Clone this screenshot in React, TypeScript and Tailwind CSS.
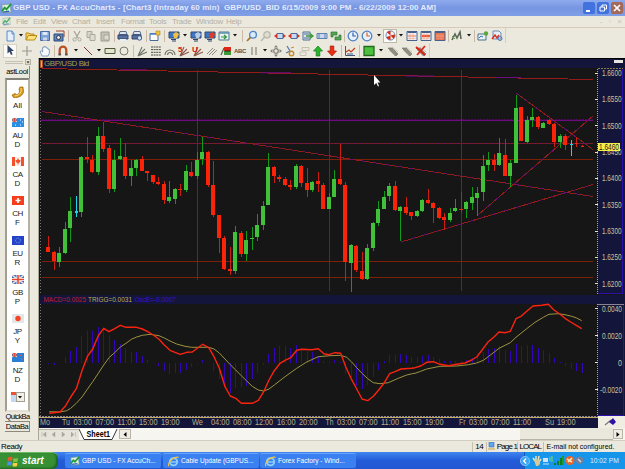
import type { ReactNode } from "react";

type Candle = [high: number, top: number, bottom: number, low: number, color: "r" | "g" | "c"];

// candle values are thirds of a pixel below the top of the chart window
const candles: Candle[] = [
  [535, 567, 582, 582, "r"], [580, 582, 610, 635, "r"], [568, 585, 611, 627, "g"], [492, 514, 586, 588, "g"],
  [418, 459, 511, 553, "g"], [414, 459, 464, 476, "c"], [293, 296, 461, 476, "g"], [238, 297, 304, 315, "r"],
  [290, 305, 342, 345, "r"], [208, 234, 342, 350, "g"], [192, 234, 273, 281, "r"], [262, 270, 393, 406, "r"],
  [277, 305, 393, 402, "g"], [240, 294, 304, 306, "g"], [256, 296, 355, 364, "r"], [305, 330, 355, 383, "g"],
  [303, 306, 331, 354, "g"], [294, 304, 338, 340, "r"], [338, 339, 346, 368, "r"], [350, 352, 372, 377, "r"],
  [357, 371, 379, 381, "r"], [370, 378, 426, 437, "r"], [370, 417, 429, 434, "g"], [390, 393, 424, 437, "g"],
  [378, 393, 397, 414, "r"], [321, 339, 397, 402, "g"], [312, 342, 355, 357, "r"], [282, 305, 355, 362, "g"],
  [236, 281, 303, 320, "g"], [279, 281, 380, 388, "r"], [308, 380, 472, 476, "r"], [470, 472, 540, 585, "r"],
  [535, 540, 633, 636, "r"], [568, 632, 640, 650, "r"], [503, 523, 640, 647, "g"], [518, 525, 587, 596, "r"],
  [520, 546, 587, 608, "g"], [507, 540, 544, 575, "g"], [468, 502, 538, 548, "g"], [430, 443, 502, 515, "g"],
  [286, 328, 440, 442, "g"], [324, 327, 355, 375, "r"], [352, 357, 363, 372, "r"], [357, 364, 380, 383, "r"],
  [365, 380, 387, 397, "r"], [319, 323, 388, 392, "g"], [322, 324, 375, 388, "r"], [330, 374, 395, 416, "r"],
  [369, 372, 396, 402, "g"], [342, 369, 378, 402, "r"], [376, 380, 452, 453, "r"], [404, 417, 452, 453, "g"],
  [336, 362, 416, 418, "g"], [258, 363, 378, 380, "r"], [373, 381, 611, 668, "r"], [558, 562, 615, 701, "g"],
  [562, 563, 635, 643, "r"], [582, 639, 663, 666, "r"], [558, 570, 664, 666, "g"], [492, 494, 570, 580, "g"],
  [430, 453, 495, 504, "g"], [399, 417, 452, 453, "g"], [376, 385, 415, 430, "g"], [370, 384, 457, 459, "r"],
  [445, 448, 458, 550, "g"], [417, 446, 465, 470, "r"], [461, 462, 473, 487, "r"], [456, 458, 474, 476, "g"],
  [424, 427, 459, 461, "g"], [393, 426, 435, 438, "r"], [433, 434, 450, 494, "r"], [447, 449, 480, 482, "r"],
  [465, 477, 487, 515, "r"], [451, 465, 486, 491, "g"], [424, 450, 460, 462, "g"], [402, 453, 456, 466, "r"],
  [428, 431, 453, 479, "g"], [387, 417, 436, 455, "g"], [388, 404, 420, 473, "g"], [291, 323, 402, 428, "g"],
  [281, 306, 320, 340, "g"], [288, 306, 321, 339, "r"], [240, 286, 321, 323, "g"], [244, 291, 353, 355, "r"],
  [306, 314, 354, 386, "g"], [111, 149, 314, 316, "g"], [147, 148, 249, 250, "r"], [173, 187, 251, 256, "g"],
  [150, 176, 186, 208, "g"], [175, 177, 207, 212, "r"], [192, 195, 209, 210, "g"], [183, 187, 197, 201, "r"],
  [196, 199, 252, 266, "r"], [228, 235, 251, 269, "g"], [228, 234, 261, 275, "r"], [246, 258, 262, 293, "c"],
  [238, 255, 258, 268, "r"], [262, 263, 266, 266, "r"],
];

const fills = { r: "#fb2408", g: "#41c03a", c: "#18d8e8" };
const wicks = { r: "#cc1e12", g: "#0f9a18", c: "#18d8e8" };

// oscillator bar ends, 233 is the zero line
const bars = [
  238, 240, 233, 217, 197, 185, 154, 138, 138, 125, 132, 150, 164, 178, 188, 200, 202, 214, 224, 234, 244, 257, 266,
  264, 264, 254, 247, 236, 224, 234, 258, 282, 305, 323, 310, 306, 303, 281, 263, 240, 207, 190, 183, 183, 188, 180,
  190, 198, 202, 212, 228, 231, 226, 231, 266, 280, 302, 311, 300, 276, 254, 228, 210, 210, 207, 211, 216, 216, 212,
  211, 215, 222, 229, 229, 229, 228, 224, 220, 212, 202, 192, 190, 184, 196, 197, 177, 182, 179, 179, 188, 195, 204,
  220, 231, 244, 251, 257, 263,
];

const macd: [number, string][] = [
  [0, "148,385 180,381 197,362 212,336 229,311 246,257 262,215 278,192 295,152 311,130 327,140 344,131 361,121 378,127 410,127 427,132 443,140 460,150 477,163 493,180 510,196 525,202 541,208 560,202 577,201 592,190 608,178"],
  [205, "11,188 27,215 43,250 60,305 76,333 92,340 109,355 142,355 160,346 176,320 192,285 208,257 224,236 240,226 257,218 275,196 290,193 320,194 340,191 357,206 372,209 390,203 407,205 422,245 438,280 455,312 471,342 488,347 505,334 521,315 538,293 554,266 570,260 588,252 620,250"],
  [415, "0,248 17,243 35,232 55,230 75,238 100,242 125,238 150,234 170,225 185,216 202,194 220,170 238,155 252,141 270,143 286,139 303,101 318,94 335,79 354,63 380,61 400,58 417,75 434,87 450,100 467,111 484,121 500,131"],
];

const trigger: [number, string][] = [
  [0, "148,380 180,381 200,377 212,370 229,355 246,336 262,313 278,290 295,265 311,240 328,217 344,203 361,186 378,175 394,163 410,156 427,151 450,148 477,152 493,159 510,168 530,177 555,184 575,187 620,187"],
  [205, "11,187 27,192 43,204 60,222 76,239 92,255 109,272 125,288 142,304 160,315 176,318 192,312 208,300 240,275 275,250 305,231 340,215 375,212 407,211 425,217 440,231 455,248 471,265 488,281 505,293 525,296 550,293 580,280 605,270 622,266"],
  [415, "0,265 17,259 35,252 75,244 125,243 160,239 185,234 205,226 220,215 252,190 286,173 303,157 335,131 360,112 385,97 402,88 430,86 450,89 470,94 485,99 500,107"],
];

const toPoints = (parts: [number, string][]) =>
  parts
    .flatMap(([dx, s]) =>
      s.split(" ").map((p) => {
        const [x, y] = p.split(",").map(Number);
        return `${(dx + x / 3).toFixed(1)},${(285 + y / 3).toFixed(1)}`;
      })
    )
    .join(" ");

const barX = (i: number) => Math.round(48.9 + 5.5 * i - 0.5);

const times: [string, number, number][] = [
  ["Mo", 40, 10], ["Tu", 62, 8], ["03:00", 73.5, 18.5], ["07:00", 95.5, 18.5], ["11:00", 117.5, 18], ["15:00", 139, 18.5],
  ["19:00", 161, 18.5], ["We", 192, 11], ["04:00", 211, 18.5], ["08:00", 233, 18.5], ["12:00", 255, 18], ["16:00", 277, 18.5],
  ["20:00", 299, 18.5], ["Th", 325.5, 8], ["03:00", 337, 18.5], ["07:00", 359, 18.5], ["11:00", 381, 18], ["15:00", 403, 18.5],
  ["19:00", 425, 18.5], ["Fr", 459, 6.5], ["03:00", 469, 18.5], ["07:00", 491, 18.5], ["11:00", 513, 18], ["Su", 545, 9],
  ["19:00", 557, 18.5],
];

const prices = ["1.6600", "1.6550", "1.6500", "1.6450", "1.6400", "1.6350", "1.6300", "1.6250", "1.6200"];

/* ---------- toolbar ---------- */

function Ico({ children, w = 12 }: { children: ReactNode; w?: number }) {
  return (
    <span className="flex w-[14px] shrink-0 items-center justify-center">
      <svg width={w} height={w} viewBox="0 0 12 12" fill="none">{children}</svg>
    </span>
  );
}

function Drop({ className = "w-2" }: { className?: string }) {
  return (
    <span className={`flex shrink-0 items-center justify-center ${className}`}>
      <svg width="4" height="3" viewBox="0 0 4 3"><path d="M0 0h4L2 2.6z" fill="#111" /></svg>
    </span>
  );
}

function Sep({ className = "w-1" }: { className?: string }) {
  return (
    <span className={`flex shrink-0 justify-center ${className}`}>
      <span className="h-[12px] w-px bg-[#c9b9a6]" />
    </span>
  );
}

const Monitor = ({ badge }: { badge: string }) => (
  <Ico>
    <path d="M1 2h10v6H1z" fill="#3f76c4" stroke="#30486f" />
    <path d="M3 9.5h5M4 11h4" stroke="#30486f" />
    <path d="M5 4l3-2 3 2-2 4-3 0z" fill={badge} />
  </Ico>
);

const Grid = ({ a, b }: { a: string; b: string }) => (
  <Ico>
    <path d="M1 1.5h10v9H1z" fill={a} stroke="#44628c" />
    <path d="M1.5 2.5h9" stroke="#44628c" />
    <path d="M2 6h8" stroke={b} strokeWidth="2.4" />
    <path d="M2 8.6h8M4 3v7M7 3v7" stroke="#e69a80" strokeWidth=".5" />
  </Ico>
);

const BoxArrows = () => (
  <Ico>
    <path d="M3 3.5h6v5H3z" fill="#c3dcf3" stroke="#4a6a9a" />
    <path d="M0 6l3-2.3v4.6zM12 6L9 3.7v4.6z" fill="#d8301c" />
  </Ico>
);

const Clock = ({ hue }: { hue: string }) => (
  <Ico>
    <circle cx="6" cy="6" r="4.8" fill="#e8f1fb" stroke="#4d80c9" strokeWidth="1.3" />
    <path d="M6 2.5V6l3 0" stroke={hue} strokeWidth="1.2" />
  </Ico>
);

const Fan = ({ mark, hue }: { mark?: string; hue: string }) => (
  <Ico>
    <path d="M2 11L6 2M2 11l7-7M2 11l9-4" stroke={hue} strokeWidth="1.1" />
    {mark && <text x="0" y="7" fontSize="8" fontWeight="bold" fill="#d42414" fontFamily="Liberation Sans, sans-serif">{mark}</text>}
  </Ico>
);

const Eraser = ({ x }: { x?: boolean }) => (
  <Ico>
    <path d="M1 3l4 0 6 6-2 2z" fill="#8e8d84" stroke="#6c6b63" strokeWidth=".6" />
    <path d="M2 5l6 6M5 2l6 5" stroke="#b5b3a8" strokeWidth=".8" />
    {x && <path d="M1 2l9 8M10 1L2 10" stroke="#e02012" strokeWidth="1.7" />}
  </Ico>
);

function MainToolbar() {
  return (
    <div className="flex h-[15px] w-[506px] shrink-0 items-center border-r border-[#d4d0c2] pl-[3px]">
      <Ico><path d="M3 1h5l2 2.5V11H3z" fill="#e4effb" stroke="#5b8cc9" /><path d="M8 1v3h2" stroke="#5b8cc9" /></Ico>
      <Drop className="w-[7px]" />
      <Ico><path d="M1 10V3h3l1 1h4v2" fill="#f3d060" stroke="#b88a1c" /><path d="M1 10l2.5-4.5H12L9.5 10z" fill="#ffe27a" stroke="#b88a1c" /></Ico>
      <Ico><path d="M1.5 1.5h9v9h-9z" fill="#7da2d8" stroke="#4a6ca8" /><path d="M3.5 2h5v3h-5z" fill="#dfe9f6" /><path d="M4 7.5h4v3H4z" fill="#cbd8ea" /></Ico>
      <Ico><path d="M1 4h9v7H1z" fill="#5f88c4" stroke="#2c4676" /><path d="M3 1h8v6" stroke="#9a3c28" /><circle cx="5.5" cy="7.5" r="2" fill="#e3e8ef" stroke="#333" /></Ico>
      <Sep />
      <Ico><path d="M3 1l4 7M9 1L5 8" stroke="#a8a69a" strokeWidth="1.3" /><circle cx="3.5" cy="9.5" r="1.6" stroke="#a8a69a" /><circle cx="8.5" cy="9.5" r="1.6" stroke="#a8a69a" /></Ico>
      <Ico><path d="M2 1.5h5v6H2z" fill="#d6d4c8" stroke="#aaa89b" /><path d="M5 4.5h5v6H5z" fill="#dedccf" stroke="#aaa89b" /></Ico>
      <Ico><path d="M2 2h8v9H2z" fill="#c5c3b7" stroke="#9d9b8f" /><path d="M5 5h5v5H5z" fill="#dddbd0" stroke="#a9a79b" /></Ico>
      <Sep />
      <Ico><path d="M3 1.5h6l1 3H2z" fill="#dbe5f1" stroke="#5a6b8a" /><path d="M1 5h10v4H1z" fill="#56719f" stroke="#33466a" /><path d="M3 9h6v2H3z" fill="#e8eef7" /></Ico>
      <Ico><path d="M3 1.5h6l1 3H2z" fill="#dbe5f1" stroke="#5a6b8a" /><path d="M1 5h9v4H1z" fill="#56719f" stroke="#33466a" /><circle cx="8.5" cy="8" r="2.2" fill="#cfe2f5" stroke="#3e5f95" /></Ico>
      <Sep />
      <Ico><path d="M1 3.5h8v7H1z" fill="#fdfdf8" stroke="#48689c" /><path d="M1 4h8" stroke="#4e7fc9" strokeWidth="1.5" /><path d="M7 1h4v4H7z" fill="#f0c23c" stroke="#b08820" strokeWidth=".6" /></Ico>
      <Sep className="w-[5px]" />
      <Monitor badge="#f5c040" />
      <Drop />
      <Monitor badge="#b9cde8" />
      <Monitor badge="#e03a20" />
      <Ico><path d="M1 2h10v8H1z" fill="#e9f3ef" stroke="#4f7892" /><path d="M1 3h10" stroke="#5c8fb0" strokeWidth="1.5" /><path d="M3 7h5M6 5l2.4 2L6 9" stroke="#2e9444" strokeWidth="1.2" /></Ico>
      <Drop />
      <Sep className="w-[6px]" />
      <Ico><circle cx="7" cy="4.8" r="3.4" fill="#d9ecfb" stroke="#5285c4" strokeWidth="1.3" /><path d="M4.5 7.3L1 11" stroke="#a9742f" strokeWidth="1.7" /></Ico>
      <Ico><circle cx="7" cy="4.8" r="3.2" fill="#deddd2" stroke="#bab8ac" strokeWidth="1.3" /><path d="M4.5 7.3L1 11" stroke="#bab8ac" strokeWidth="1.5" /></Ico>
      <BoxArrows />
      <BoxArrows />
      <Ico><path d="M1 2h7v8H1z" fill="#dbe7f3" stroke="#4f6c8e" /><path d="M2 4h5M2 8h5" stroke="#4f6c8e" /><path d="M4 6h6M8 3.5L11 6 8 8.5" stroke="#3d9a3a" strokeWidth="1.3" /></Ico>
      <Ico><path d="M1 3.5h10v5H1z" fill="#c7d9ee" stroke="#5f7fb0" /><path d="M3 3.5v5M9 3.5v5" stroke="#5f7fb0" /></Ico>
      <Ico><path d="M1 2h6v3H3v2H1zM11 10H5V7h4V5h2z" fill="#55a556" stroke="#2d7531" strokeWidth=".7" /></Ico>
      <Sep className="w-[3px]" />
      <Clock hue="#2f62b0" />
      <Clock hue="#dd6b20" />
      <Drop className="w-[9px]" />
      <span className="flex h-[14px] w-[14px] items-center justify-center border border-[#bdb9ab] bg-[#fbfaf5]">
        <svg width="11" height="11" viewBox="0 0 12 12"><circle cx="6" cy="6" r="5" fill="#f3f1ec" stroke="#5b86bf" /><path d="M6 6L2 2.5a5 5 0 0 1 4-1.5zM6 6l4.8-1a5 5 0 0 1-1.5 4.5zM6 6l0 5a5 5 0 0 1-4.5-3z" fill="#d62a18" /></svg>
      </span>
      <Drop />
      <Grid a="#f4f6fa" b="#f2b59f" />
      <Grid a="#f5efe9" b="#ee5a36" />
      <Grid a="#f0714e" b="#f08a68" />
      <Sep className="w-[3px]" />
      <Ico><path d="M1 10l3-6 2 4 3-6 1 7" stroke="#5a6657" strokeWidth="1.6" /><path d="M1 6l3 3" stroke="#55a04a" /></Ico>
      <Drop className="w-[9px]" />
      <Sep className="w-[3px]" />
      <Ico><path d="M1 4h8v6H1z" fill="#e8f2f6" stroke="#50708a" /><path d="M2 8l2-2 2 1" stroke="#3b70b0" /><circle cx="9" cy="3.5" r="2.2" fill="#58a83a" /></Ico>
      <Ico><path d="M2 1h6l2 2v6H2z" fill="#e6eef8" stroke="#6d8ab5" /><path d="M1 9l3-4 2 3 2-3" stroke="#d7301c" strokeWidth="1.4" /><circle cx="9" cy="8.5" r="2" stroke="#4a78b8" /></Ico>
    </div>
  );
}

function DrawToolbar() {
  return (
    <div className="flex h-[15px] w-[430px] shrink-0 items-center border-r border-[#d4d0c2] pl-[3px]">
      <span className="flex h-[14px] w-[14px] items-center justify-center border border-[#d6d2c4] bg-[#fbfaf5]">
        <svg width="10" height="11" viewBox="0 0 10 11"><path d="M2.5 0v8.5l2-1.8L6 10l1.6-.8L6.2 6H9z" fill="#2f4468" /></svg>
      </span>
      <span className="w-[3px]" />
      <Ico><path d="M6 1v10M1 6h10" stroke="#9b9a90" strokeWidth="1.2" /></Ico>
      <span className="w-1" />
      <Ico><path d="M3 11L1 6.5l1.4-.6L3.6 7V2.6h1.3V1.5h1.4v.8h1.5v1h1.4v1.2h1.2V8L9 11z" fill="#f7f9fc" stroke="#7795bf" strokeWidth=".9" /></Ico>
      <Sep />
      <Ico><path d="M2.7 10V5a3.3 3.3 0 0 1 6.6 0v5" stroke="#b9502a" strokeWidth="2.3" /><path d="M1.5 9.5h2.4M8.1 9.5h2.4" stroke="#555" strokeWidth="2" /></Ico>
      <Drop className="w-[11px]" />
      <Ico><path d="M2 2l8 8" stroke="#7d3030" /></Ico>
      <Drop />
      <Ico><path d="M1 3.5h10v5H1z" fill="#e4e4cf" stroke="#4c5a35" /></Ico>
      <Ico><circle cx="6" cy="6" r="4" fill="#eceadd" stroke="#77786a" /></Ico>
      <Sep />
      <Fan hue="#70746a" />
      <Ico><path d="M1 2h10M1 4.6h10M1 7.3h10M1 10h10" stroke="#4a4b45" strokeDasharray="2 .6" /></Ico>
      <Ico><path d="M1 10a5 5 0 0 1 10 0M3.6 10a2.5 2.5 0 0 1 5 0" stroke="#706f60" strokeWidth="1.1" /></Ico>
      <Fan mark="5" hue="#8a5a48" />
      <Fan mark="U" hue="#8a5a48" />
      <Ico><path d="M1 9l6-6M3 10l6-6M6 10l5-5" stroke="#8c8b80" /></Ico>
      <Ico><path d="M1 10l3-7" stroke="#5a6b4c" strokeWidth="1.3" /><path d="M4 2h7v4H4z" fill="#d92a18" /><path d="M4 6h7v4H4z" fill="#3b9a3c" /><path d="M5 6h5" stroke="#222" /></Ico>
      <span className="flex w-[14px] justify-center text-[6px] leading-none font-bold tracking-[-0.4px] text-[#55544c]">ABC</span>
      <Ico><path d="M4 2v8M8 2v8" stroke="#b0aea2" strokeWidth="2" /></Ico>
      <Drop />
      <Ico><path d="M6 0l2 2.5H4zM6 12l2-2.5H4zM0 6l2.5-2v4zM12 6L9.5 4v4z" fill="#85847b" /><circle cx="6" cy="6" r="2.3" stroke="#85847b" strokeWidth="1.3" /></Ico>
      <Ico><path d="M3 1l3 5-4 2" stroke="#5a7cab" strokeWidth="1.3" /><circle cx="7.5" cy="8.5" r="2.2" stroke="#c48b2b" strokeWidth="1.4" /><path d="M7 3l3-1" stroke="#c48b2b" /></Ico>
      <Ico><path d="M4 2.5h7v3H4zM2 7h6v3.5H2z" stroke="#c2c0b3" /></Ico>
      <Ico><path d="M6 1l4.500 5H7.800v5H4.200V6H1.500z" fill="#2bb52b" stroke="#0f7a14" strokeWidth=".7" /></Ico>
      <Ico><path d="M6 11L1.500 6h2.700V1h3.600v5h2.700z" fill="#f02c12" stroke="#a81a0a" strokeWidth=".7" /></Ico>
      <Sep />
      <Ico><path d="M1.5 1v9.500H11" stroke="#45566f" /><path d="M2 7l3-2 2 2 4-4" stroke="#c13d23" strokeWidth="1.2" /><path d="M3 9h6" stroke="#3b63a0" /></Ico>
      <Sep className="w-[5px]" />
      <Ico><path d="M1 1.5h10v9H1z" fill="#4cc03e" stroke="#226b1c" strokeWidth="1.3" /></Ico>
      <Drop className="w-[10px]" />
      <Eraser />
      <Eraser />
      <Eraser x />
    </div>
  );
}

/* ---------- side bar ---------- */

const flags: { a: string; b: string; art: ReactNode }[] = [
  { a: "AU", b: "D", art: <><rect width="12" height="9" fill="#2a8fe0" /><path d="M0 0l5 4M5 0L0 4" stroke="#f4d6cf" /><path d="M2.5 0v4M0 2h5" stroke="#e04a32" /><path d="M8 2h1M10 4h1M8 7h1M3 7h1" stroke="#fff" /></> },
  { a: "CA", b: "D", art: <><rect width="12" height="9" fill="#fdf1ee" /><path d="M0 0h3v9H0zM9 0h3v9H9z" fill="#f4502e" /><path d="M6 1l1 2 1.500 0-.5 2.300L6.500 6v1.500h-1V6L4 5.300 3.500 3 5 3z" fill="#f4502e" /></> },
  { a: "CH", b: "F", art: <><rect width="12" height="9" fill="#f43e1c" /><path d="M6 2v5M3.5 4.5h5" stroke="#fff" strokeWidth="1.7" /></> },
  { a: "EU", b: "R", art: <><rect width="12" height="9" fill="#2343c8" /><circle cx="6" cy="4.5" r="2.4" fill="none" stroke="#8fa6e6" strokeDasharray="1 1" /></> },
  { a: "GB", b: "P", art: <><rect width="12" height="9" fill="#3b6fc4" /><path d="M0 0l12 9M12 0L0 9" stroke="#f1dcd8" strokeWidth="1.5" /><path d="M6 0v9M0 4.5h12" stroke="#fff" strokeWidth="3" /><path d="M6 0v9M0 4.5h12" stroke="#e8452c" strokeWidth="1.6" /></> },
  { a: "JP", b: "Y", art: <><rect width="12" height="9" fill="#e4e6ea" /><circle cx="6" cy="4.5" r="2.7" fill="#f44420" /></> },
  { a: "NZ", b: "D", art: <><rect width="12" height="9" fill="#2a7fd4" /><path d="M0 0l5 4M5 0L0 4" stroke="#f4d6cf" /><path d="M2.5 0v4M0 2h5" stroke="#e04a32" /><path d="M8 2.5h1.500M9 6h1.500" stroke="#f25a3c" /></> },
];

function SideBar() {
  return (
    <aside className="flex w-[39px] shrink-0 flex-col border-r border-[#aaa797] pl-[5px]">
      <div className="flex h-[8px] shrink-0 items-center gap-[2px]">
        <span className="h-[3px] w-[18px] border-y border-[#c4c1b2]" />
        <span className="flex h-[6px] w-[6px] items-center justify-center border border-[#b8b4a5] text-[6px] leading-none text-black">×</span>
      </div>
      <div className="flex h-[12px] w-[25px] shrink-0 items-center justify-center border-r border-[#8d8a7d] text-[7.5px] tracking-[-0.4px]">astLool</div>
      <div className="flex h-[334px] w-[25px] shrink-0 flex-col items-center border-2 border-t-[#85827a] border-r-[#b5b2a5] border-b-[#e3e0d3] border-l-[#a19e92] bg-white pt-[6px] text-[8px] leading-[9px] text-[#222]">
        <div className="flex h-[32px] shrink-0 flex-col items-center">
          <svg width="14" height="13" viewBox="0 0 14 13"><path d="M9 1l3 0 .5 5c-1 4-5 6-10 5.500L1 9l3-1.500 1.500 1c2 0 3-1.500 3-3.500L8 3z" fill="#d99b1e" stroke="#93610c" strokeWidth=".7" /><path d="M10 2c1 4-1 7-6 8" stroke="#ffe384" fill="none" /></svg>
          <span className="mt-[2px]">All</span>
        </div>
        {flags.map((f) => (
          <div key={f.a} className="flex h-[39.2px] shrink-0 flex-col items-center">
            <svg width="12" height="9" viewBox="0 0 12 9">{f.art}</svg>
            <span className="mt-[4px] tracking-[-0.5px]">{f.a}</span>
            <span>{f.b}</span>
          </div>
        ))}
        <div className="flex items-center">
          <svg width="5" height="10" viewBox="0 0 5 10"><path d="M0 0h5v3H0z" fill="#e9542e" /><path d="M0 3h5v7H0z" fill="#c6d8f0" /></svg>
          <span className="flex h-[10px] w-[9px] items-center justify-center border border-[#a19e92] bg-[#f1efe6]"><Drop className="w-1" /></span>
        </div>
      </div>
      <div className="flex h-[10px] w-[25px] shrink-0 items-center justify-center border-b border-[#8d8a7d] text-[7.5px] tracking-[-0.6px]">QuickBa</div>
      <div className="flex h-[10px] w-[25px] shrink-0 items-center justify-center border-r border-b border-[#8d8a7d] text-[7.5px] tracking-[-0.4px]">DataBa</div>
    </aside>
  );
}

/* ---------- charts ---------- */

function PricePlot() {
  return (
    <svg className="block" width="586" height="227" viewBox="39 68 586 227" fontFamily="Liberation Sans, sans-serif">
      <rect x="39" y="68" width="586" height="227" fill="#161616" />
      <g shapeRendering="crispEdges">
        <rect x="40" y="120" width="553" height="1" fill="#6f0a80" />
        <path d="M42 119.5H593" stroke="#4a0a58" strokeDasharray="2 1" />
        <path d="M42 143.5H593" stroke="#7d1e22" />
        <path d="M42 143.5H593" stroke="#691052" strokeDasharray="1 2" />
        <path d="M42 159.5H593M42 261.5H593M42 277.5H593" stroke="#7d2008" />
        <path d="M197.5 70V280M329.5 70V291M461.5 70V291" stroke="#7d2008" />
      </g>
      <g strokeWidth="1" stroke="#921b1c" fill="none" shapeRendering="crispEdges">
        <path d="M42 68.5L593 79.5" />
        <path d="M42 111.5L593 196.5" />
        <path d="M401 242L593 184.5" />
        <path d="M478 215L593 116" />
        <path d="M516 93L593 149.5" />
      </g>
      <g stroke="#6d0d6d" fill="none" strokeDasharray="3 9" shapeRendering="crispEdges">
        <path d="M42 111.5L593 196.5" />
        <path d="M401 242L593 184.5" />
        <path d="M478 215L593 116" />
        <path d="M516 93L593 149.5" />
      </g>
      <path d="M120 69.7h27M262 72.7h29M406 76h28M496 77.5h25" stroke="#6d0d80" />
      <g shapeRendering="crispEdges">
        {candles.map(([h, t, b, l, c], i) => {
          const thin = c === "c" || i > 95;
          return (
            <g key={i}>
              <rect x={barX(i)} y={58 + h / 3} width={1} height={Math.max((l - h) / 3, 1)} fill={wicks[c]} />
              <rect x={barX(i) - (thin ? 1 : 2)} y={58 + t / 3} width={thin ? 3 : 4} height={Math.max((b - t) / 3, 1)} fill={fills[c]} />
            </g>
          );
        })}
      </g>
      {/* price scale */}
      <rect x="597" y="68" width="26" height="226" fill="#14153a" />
      <g shapeRendering="crispEdges">
        <path d="M597.5 69V294" stroke="#b9a45a" strokeDasharray="1 1" />
        <path d="M598 68.5H623" stroke="#8b7d4a" strokeDasharray="2 1" />
        <path d="M598 293.5H623M622.5 69V294" stroke="#2c10a8" />
        <path d="M623 68h2v227h-2z" fill="#14153a" />
        {prices.map((_, i) => (
          <path key={i} d={`M595 ${73 + i * 26.35}h3`} stroke="#e6e0c4" />
        ))}
        <path d="M40.5 70V295" stroke="#77747c" strokeDasharray="1 2" />
      </g>
      {prices.map((p, i) => (
        <text key={p} x="602" y={76 + i * 26.35} fontSize="8.5" fill="#c9c49c" textLength="19.5" lengthAdjust="spacingAndGlyphs">{p}</text>
      ))}
      <rect x="598" y="143" width="22" height="8" fill="#f7f04c" />
      <text x="599" y="150" fontSize="8.5" fill="#222" textLength="20" lengthAdjust="spacingAndGlyphs">1.6460</text>
      <path d="M374 75v10l2.300-2 1.700 3.500 1-.5-1.500-3.500h2.800z" fill="#fff" />
    </svg>
  );
}

function MacdPlot() {
  return (
    <svg className="block" width="586" height="133" viewBox="39 295 586 133" fontFamily="Liberation Sans, sans-serif">
      <text x="43.5" y="302" fontSize="8" fill="#c02034" textLength="42.5" lengthAdjust="spacingAndGlyphs">MACD=0.0025</text>
      <text x="88" y="302" fontSize="8" fill="#bab04e" textLength="44" lengthAdjust="spacingAndGlyphs">TRIGG=0.0031</text>
      <text x="134.5" y="302" fontSize="8" fill="#3d10cc" textLength="41" lengthAdjust="spacingAndGlyphs">OscE=-0.0007</text>
      <rect x="39" y="304" width="586" height="112" fill="#161616" />
      <g shapeRendering="crispEdges">
        {bars.map((v, i) => (
          <rect key={i} x={barX(i)} y={285 + Math.min(v, 233) / 3} width={1} height={Math.abs(v - 233) / 3} fill="#3206b8" />
        ))}
        <path d="M40.5 304V416" stroke="#77747c" strokeDasharray="1 2" />
      </g>
      <polyline points={toPoints(trigger)} fill="none" stroke="#9c9340" strokeWidth="1" />
      <polyline points={toPoints(macd)} fill="none" stroke="#fb2310" strokeWidth="1.4" strokeLinejoin="round" />
      <rect x="598" y="304" width="27" height="112" fill="#14153a" />
      <g shapeRendering="crispEdges">
        <path d="M597.5 304V416" stroke="#b9a45a" strokeDasharray="1 1" />
        <path d="M598 304.5H624" stroke="#8b8490" />
        <path d="M623.5 305V416M598 415.5H624" stroke="#2c10a8" />
        <path d="M595 308.5h3M595 335.5h3M595 362.5h3M595 389.5h3" stroke="#e6e0c4" />
      </g>
      {["0.0040", "0.0020", "0", "-0.0020"].map((t, i) => (
        <text key={t} x="622" y={312 + i * 27} fontSize="8.5" fill="#c9c49c" textAnchor="end" textLength={[20, 20, 4, 22][i]} lengthAdjust="spacingAndGlyphs">{t}</text>
      ))}
      {/* time scale */}
      <rect x="39" y="416" width="559" height="12" fill="#14153a" />
      <path d="M39 417.5H598" stroke="#c3ad5e" shapeRendering="crispEdges" />
      <path d="M39 416.5H598" stroke="#8b8490" strokeDasharray="2 1" shapeRendering="crispEdges" />
      {times.map(([t, x, w]) => (
        <text key={x} x={x} y="425" fontSize="8.5" fill="#b5b08c" textLength={w} lengthAdjust="spacingAndGlyphs">{t}</text>
      ))}
      <rect x="598" y="416" width="27" height="12" fill="#f0eee3" />
      <path d="M605 425l6-5" stroke="#777" strokeWidth="1.2" />
      <path d="M609 422l4-4 3 4-3 3z" fill="#2d12a8" />
    </svg>
  );
}

function ChartWindow() {
  return (
    <main className="flex h-[370px] w-[586px] flex-col bg-[#14153a]">
      <div className="flex h-[10px] items-center border-t border-black pl-[1px] text-[8px] leading-none text-[#a89e48]">
        <span className="mr-[1px] h-[8px] w-[3px] border border-[#b0542c] bg-[#f5a173]" />
        <span className="tracking-[-0.45px]">GBP/USD Bid</span>
        <span className="mr-[2px] mb-[4px] ml-auto h-[3px] w-[9px] bg-[#e8e5dc]" />
      </div>
      <PricePlot />
      <MacdPlot />
    </main>
  );
}

/* ---------- bottom ---------- */

function SheetTabs() {
  return (
    <div className="flex h-[12px] items-center bg-[#f6f5ef]">
      <div className="flex h-[11px] w-[40px] items-center justify-around border-t border-[#b8b5a8] bg-[#e6e4da]">
        {["M5 0v5L2 2.5zM1 0v5", "M4 0v5L1 2.5z", "M1 0v5l3-2.500z", "M0 0v5l3-2.500zM4.5 0v5"].map((d) => (
          <svg key={d} width="6" height="5" viewBox="0 0 6 5"><path d={d} fill="#aaa89c" stroke="#aaa89c" strokeWidth=".5" /></svg>
        ))}
      </div>
      <svg className="block" width="40" height="11" viewBox="0 0 40 11"><path d="M0 0l5 10.500h28L38 0" fill="#fff" stroke="#222" strokeWidth=".9" /><text x="7.5" y="8" fontSize="8.5" fontWeight="bold" fontFamily="Liberation Sans, sans-serif" textLength="23.5" lengthAdjust="spacingAndGlyphs">Sheet1</text></svg>
      <span className="flex h-[10px] w-[12px] items-center justify-center border border-[#b8b5a8] bg-[#efede3]">
        <svg width="4" height="5" viewBox="0 0 4 5"><path d="M3.5 0v5L.5 2.5z" fill="#000" /></svg>
      </span>
      <span className="ml-auto h-full w-[93px] border-b border-[#b8b5a8] bg-[#eae8dd]" />
      <span className="mr-[2px] flex h-[10px] w-[10px] items-center justify-center border border-[#b8b5a8] bg-[#efede3]">
        <svg width="4" height="5" viewBox="0 0 4 5"><path d="M.5 0v5l3-2.500z" fill="#000" /></svg>
      </span>
    </div>
  );
}

function StatusBar() {
  return (
    <div className="flex h-[12px] shrink-0 items-center border-t border-[#d3cfc0] bg-[#ebe9de] pl-[1px] text-[8px] leading-none whitespace-nowrap text-black">
      <span className="w-[476px] tracking-[-0.4px]">Ready</span>
      <span className="flex h-[10px] w-[15px] items-center justify-center border-x border-[#c5bfae] tracking-[-0.4px]">14</span>
      <svg className="shrink-0" width="9" height="9" viewBox="0 0 9 9"><path d="M2 0h5v5H2z" fill="#62a4e8" stroke="#3c6faf" strokeWidth=".6" /><path d="M1 6h7v2H1z" fill="#d8c48c" /></svg>
      <span className="flex h-[10px] w-[23px] items-center border-r border-[#c5bfae] pl-px tracking-[-0.8px]">Page 1</span>
      <span className="flex h-[10px] w-[26px] items-center border-r border-[#c5bfae] pl-px tracking-[-0.9px]">LOCAL</span>
      <span className="origin-left scale-x-[0.87] pl-[3px]">E-mail not configured.</span>
    </div>
  );
}

const Ie = () => (
  <svg className="shrink-0" width="11" height="11" viewBox="0 0 12 12" fill="none">
    <circle cx="6" cy="6.3" r="4" stroke="#8fd0ff" strokeWidth="2" />
    <path d="M3 6.5h7" stroke="#8fd0ff" strokeWidth="1.5" />
    <path d="M1 11C-1 8 6 0 11.5 1.5" stroke="#f2c53c" strokeWidth="1.3" />
  </svg>
);

const ChartLogo = ({ size }: { size: number }) => (
  <svg className="shrink-0" width={size} height={size} viewBox="0 0 12 12" fill="none">
    <path d="M1 2l9-1 1 9-9 1z" fill="#dff0e4" stroke="#7a9a90" strokeWidth=".8" />
    <path d="M1 9l3-4 2 2 5-6" stroke="#1f9a3a" strokeWidth="2" />
    <path d="M2 10l7-1" stroke="#2c64b8" strokeWidth="1.5" />
  </svg>
);

function TaskButton({ icon, label }: { icon: ReactNode; label: string }) {
  return (
    <div className="flex h-[15px] w-[96px] shrink-0 items-center gap-[2px] rounded-[2px] border-t border-[#6ba3f8] bg-[#3b80f0] pl-[5px] text-[8px] leading-none whitespace-nowrap text-white">
      {icon}
      <span className="w-[78px] origin-left scale-x-[0.82]">{label}</span>
    </div>
  );
}

function TaskBar() {
  return (
    <footer className="flex h-[17px] shrink-0 items-center bg-gradient-to-b from-[#3f86f0] via-[#245bd8] to-[#2257d2]">
      <div className="flex h-full w-[58px] items-center gap-[3px] rounded-r-[6px] border-t border-[#6cb665] bg-[#379034] pl-[7px] shadow-[inset_-2px_-1px_2px_#1f6322]">
        <svg width="12" height="11" viewBox="0 0 12 11"><path d="M1 1.5q2.500-1.500 4.500 0L5 5Q3 4 .5 5z" fill="#f0572a" /><path d="M6.5 2q2 1.200 4.500 0l-.5 3.500q-2.500 1-4.500 0z" fill="#84c441" /><path d="M.5 6q2.500-1 4.500 0l-.5 3.500Q2.500 8.500 0 9.500z" fill="#4d90f0" /><path d="M6 6.5q2 1.200 4.500 0L10 10q-2.500 1-4.500 0z" fill="#f7cf3a" /></svg>
        <span className="text-[10px] leading-none font-bold text-white italic">start</span>
      </div>
      <div className="ml-[7px] flex gap-[1.5px]">
        <TaskButton icon={<ChartLogo size={10} />} label="GBP USD - FX AccuCh..." />
        <TaskButton icon={<Ie />} label="Cable Update (GBPUS..." />
        <TaskButton icon={<Ie />} label="Forex Factory - Wind..." />
      </div>
      <div className="ml-auto flex h-full w-[101px] items-center border-l border-[#0f5cb8] bg-[#1795ea] whitespace-nowrap">
        <svg className="-ml-[5px] shrink-0" width="10" height="10" viewBox="0 0 10 10"><circle cx="5" cy="5" r="4.6" fill="#3aa4f4" stroke="#a5d8ff" strokeWidth=".7" /><path d="M6.2 2.5L3.7 5l2.500 2.500" stroke="#fff" strokeWidth="1.3" fill="none" /></svg>
        <svg className="ml-[1px] shrink-0" width="54" height="11" viewBox="0 0 54 11" fill="none">
          <path d="M2 3l2 3M5 1v5M8 1l-1 5M10 4L8 7" stroke="#e9e3c3" strokeWidth="1.5" /><path d="M3 5h6v4l-2 2H5z" fill="#d8c893" />
          <path d="M12 3h5v4h-5z" fill="#cfe4fa" /><path d="M12 9h6" stroke="#cfe4fa" /><path d="M19 2v4M21 1v6" stroke="#72e070" />
          <path d="M23 10V8h2v2zM26 10V6h2v4zM29 10V3h2v7z" fill="#0f7d26" /><path d="M31 10V1h2v9z" fill="#17a032" />
          <circle cx="39" cy="5.5" r="4.5" fill="#e86528" /><path d="M36 4l5 3M37 7l4-4" stroke="#fbe6c0" strokeWidth="1.5" />
          <path d="M45 3q4-3 7 0v4l-3.500 3L45 7z" fill="#76809a" /><path d="M47 4l3 3" stroke="#d9dfea" strokeWidth="1.3" />
        </svg>
        <span className="ml-[5px] origin-left scale-x-[0.84] text-[8px] leading-none text-[#dcefff]">10:02 PM</span>
      </div>
    </footer>
  );
}

const menus: [string, string][] = [
  ["File", "w-[17px]"], ["Edit", "w-[18px]"], ["View", "w-[21px]"], ["Chart", "w-[24px]"], ["Insert", "w-[25px]"],
  ["Format", "w-[28px]"], ["Tools", "w-[23px]"], ["Trade", "w-[24px]"], ["Window", "w-[30px]"], ["Help", "w-[20px]"],
];

export default function App() {
  return (
    <div className="flex h-[469px] w-[625px] flex-col overflow-hidden bg-[#ebe9de] font-['Liberation_Sans',Arial,sans-serif] text-black">
      <header className="flex h-[16px] shrink-0 items-center bg-gradient-to-b from-[#8fabee] via-[#7795e2] to-[#7f9fe6] pl-[1px] whitespace-nowrap">
        <ChartLogo size={11} />
        <span className="ml-[1px] w-[430px] text-[8px] leading-none font-bold tracking-[0.09px] whitespace-pre text-[#e4ebfc]">
          {"GBP USD - FX AccuCharts - [Chart3 (Intraday 60 min)  GBP/USD_BID 6/15/2009 9:00 PM - 6/22/2009 12:00 AM]"}
        </span>
        <div className="mr-[2px] ml-auto flex gap-[2px]">
          <svg width="12" height="12" viewBox="0 0 12 12"><rect width="12" height="12" rx="2" fill="#4272dd" /><path d="M3 9h4" stroke="#fff" strokeWidth="2" /></svg>
          <svg width="12" height="12" viewBox="0 0 12 12"><rect width="12" height="12" rx="2" fill="#4272dd" /><path d="M5 5V3h4.500v4H8M3 5h4.500v4H3z" stroke="#fff" fill="none" /></svg>
          <svg width="12" height="12" viewBox="0 0 12 12"><rect width="12" height="12" rx="2" fill="#a36a5c" /><path d="M3 3l6 6M9 3L3 9" stroke="#fff" strokeWidth="1.7" /></svg>
        </div>
      </header>
      <nav className="flex h-[12px] shrink-0 items-center border-b border-[#d8c9b9] pl-[2px] text-[8px] leading-none text-[#b3b0a2]">
        <span className="w-[14px] opacity-70"><ChartLogo size={9} /></span>
        {menus.map(([m, w]) => (
          <span key={m} className={`${w} tracking-[-0.25px]`}>{m}</span>
        ))}
        <span className="mr-[3px] ml-auto flex gap-[6px] font-bold text-[#cfccbf]"><span>-</span><span>▫</span><span>×</span></span>
      </nav>
      <MainToolbar />
      <DrawToolbar />
      <div className="flex h-[382px] shrink-0">
        <SideBar />
        <div className="flex w-[586px] flex-col">
          <ChartWindow />
          <SheetTabs />
        </div>
      </div>
      <StatusBar />
      <TaskBar />
    </div>
  );
}
